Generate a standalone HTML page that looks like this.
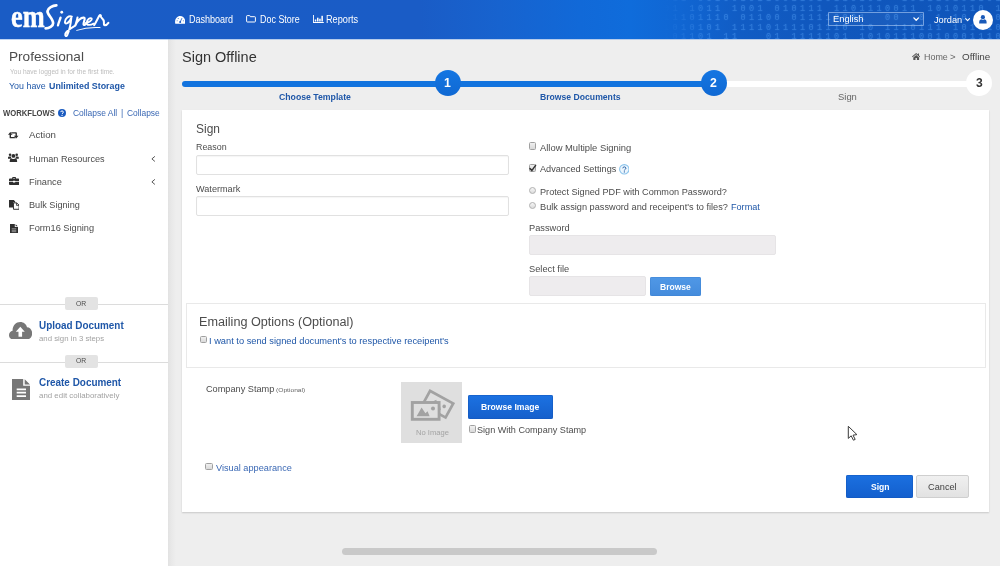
<!DOCTYPE html>
<html>
<head>
<meta charset="utf-8">
<title>emSigner - Sign Offline</title>
<style>
*{box-sizing:border-box;margin:0;padding:0}
html,body{width:1000px;height:566px;overflow:hidden;background:#eeeeee;font-family:"Liberation Sans",sans-serif;color:#444}
#wrap{position:relative;width:1000px;height:566px;overflow:hidden;background:#eeeeee}
#wrap>div,#wrap>svg{position:absolute}
.t{position:absolute;white-space:nowrap;line-height:1;transform-origin:0 0;display:block}
/* header */
#hdr{left:0;top:0;width:1000px;height:39px;overflow:hidden;background:linear-gradient(90deg,#1a5cc5 0%,#1a5cc6 42%,#1763cf 50%,#1169d8 58%,#0f6cdb 63%,#1066d3 68%,#115cc4 74%,#1057bd 82%,#0f55ba 100%)}
#matrix{position:absolute;left:664px;top:-5px;width:340px;height:52px;font-family:"Liberation Mono",monospace;font-size:8.5px;line-height:9.6px;color:#63adff;opacity:.38;filter:blur(.35px);letter-spacing:3.4px;white-space:pre;overflow:hidden;text-shadow:0 0 1.5px #4a9cf5;-webkit-mask-image:linear-gradient(90deg,transparent 0,#000 14%,#000 100%)}
#lang{left:828px;top:12px;width:96px;height:14px;border:1px solid rgba(190,215,250,.55);border-radius:1px;background:rgba(255,255,255,.04)}
#avatar{left:973px;top:10px;width:20px;height:20px;border-radius:50%;background:#fff}
/* sidebar */
#side{left:0;top:39px;width:168px;height:527px;background:#fff}
#sideshadow{left:168px;top:39px;width:8px;height:527px;background:linear-gradient(90deg,#e2e2e2 0%,#e8e8e8 40%,#eeeeee 100%)}
.hr{left:0;width:168px;height:1px;background:#dcdcdc}
.or{left:65px;width:33px;height:13px;background:#e3e3e3;border-radius:2px}
/* stepper */
.bar{top:80.9px;height:6.4px}
.dot{width:26px;height:26px;border-radius:50%;top:70px}
/* card */
#card{left:182.3px;top:110.4px;width:806.5px;height:401.4px;background:#fff;box-shadow:0 1px 1.5px rgba(0,0,0,.16)}
.inp{border:1px solid #e1e1e1;border-radius:2px;background:#fff;box-shadow:inset 0 1px 1px rgba(0,0,0,.04)}
.inp.dis{background:#eeecee;border-color:#e6e4e6;box-shadow:none}
.cb{width:7.5px;height:7.5px;border:1px solid #a0a0a0;border-radius:1.5px;background:linear-gradient(#f0f0f0,#d9d9d9)}
.rb{width:7px;height:7px;border:1px solid #b0b0b0;border-radius:50%;background:linear-gradient(#f6f6f6,#dcdcdc)}
.btn{border-radius:2px}
</style>
</head>
<body>
<div id="wrap">

<!-- HEADER -->
<div id="hdr">
<div id="matrix">011 0010010110011010110101  1011101011011101
01 1011 1001 010111 1101110011 1010110 10100
11101110 01100 011110001  00  0 1 10 1 00101
1010101 11110111101110 10 1110111 1011100011
101101 11   01 1111101 101011100100011100100
1111 001010011110010 0 01 1101101 1010 0 010</div>
</div>
<div id="lang"></div>
<div id="avatar"></div>

<!-- SIDEBAR -->
<div id="side"></div>
<div id="sideshadow"></div>
<div id="hline" style="left:0;top:39px;width:1000px;height:1.4px;background:linear-gradient(rgba(120,165,230,.75),rgba(170,200,240,.35))"></div>
<div class="hr" style="top:303.5px"></div>
<div class="or" style="top:297px"></div>
<div class="hr" style="top:361.5px"></div>
<div class="or" style="top:354.5px"></div>

<!-- STEPPER -->
<div class="bar" style="left:182px;width:532px;background:#1273de;border-radius:3px 0 0 3px"></div>
<div class="bar" style="left:713px;width:266px;background:#fff"></div>
<div class="dot" style="left:434.5px;background:linear-gradient(#1476e2,#1069d3)"></div>
<div class="dot" style="left:700.5px;background:linear-gradient(#1476e2,#1069d3)"></div>
<div class="dot" style="left:966px;background:#fff"></div>

<!-- CARD -->
<div id="card"></div>
<div class="inp" style="left:196px;top:155px;width:312.5px;height:19.5px"></div>
<div class="inp" style="left:196px;top:196px;width:312.5px;height:19.5px"></div>
<div class="cb" style="left:528.6px;top:142.4px"></div>
<div class="cb" style="left:528.6px;top:164.4px"></div>
<div class="rb" style="left:528.8px;top:186.5px"></div>
<div class="rb" style="left:528.8px;top:201.8px"></div>
<div class="inp dis" style="left:528.6px;top:235px;width:247.4px;height:19.6px"></div>
<div class="inp dis" style="left:528.6px;top:276.4px;width:117.4px;height:19.6px"></div>
<div class="btn" style="left:649.6px;top:277px;width:51.8px;height:19px;background:linear-gradient(#5098e6,#448bdc);box-shadow:0 0 0 .5px #3f84d4 inset"></div>
<!-- emailing box -->
<div style="left:185.5px;top:302.5px;width:800px;height:65.5px;border:1px solid #e9e9e9;background:#fff"></div>
<div class="cb" style="left:199.6px;top:335.6px"></div>
<!-- stamp -->
<div style="left:400.5px;top:381.5px;width:61.3px;height:61px;background:#dfdfdf"></div>
<div class="btn" style="left:468px;top:395px;width:84.5px;height:23.5px;background:linear-gradient(#1c72e2,#155fcb);box-shadow:0 0 0 .5px #1257bb inset"></div>
<div class="cb" style="left:468.6px;top:425px"></div>
<div class="cb" style="left:205.4px;top:462.8px"></div>
<!-- buttons -->
<div class="btn" style="left:846.4px;top:475.2px;width:66.4px;height:23px;background:linear-gradient(#1b70e0,#135fcd);box-shadow:0 0 0 .5px #1257bb inset"></div>
<div class="btn" style="left:916px;top:475.2px;width:53px;height:23px;background:linear-gradient(#f0f0f0,#e2e2e2);border:1px solid #cfcfcf"></div>
<!-- scrollbar -->
<div style="left:342.3px;top:548px;width:314.3px;height:7px;border-radius:3.5px;background:#c9c9c9"></div>

<!-- LOGO -->
<span class="t" style="left:11.0px;top:0.9px;font-family:'Liberation Serif',serif;font-weight:700;font-size:31px;color:#fff;-webkit-text-stroke:.45px #fff;transform:scaleX(.85)">em</span>
<svg style="left:0;top:0" width="120" height="40" viewBox="0 0 120 40" fill="none" stroke="#fff" stroke-linecap="round" stroke-linejoin="round">
<g transform="translate(40,0) scale(0.075)">
<path d="M218,72 C170,75 105,105 100,150 C97,195 175,250 175,310 C175,350 120,378 75,378" stroke-width="36"/>
<circle cx="290" cy="163" r="19" fill="#fff" stroke="none"/>
<path d="M274,235 C264,270 246,305 240,338" stroke-width="31"/>
<path d="M425,222 C385,200 332,248 332,295 C334,328 388,318 418,235 C412,300 395,400 362,470 C350,492 330,480 338,450 C350,410 420,370 468,342" stroke-width="26"/>
<path d="M500,235 C495,270 480,305 472,337 C495,280 545,230 585,235 C615,240 575,300 580,325 C583,340 600,335 612,318" stroke-width="28"/>
<path d="M612,305 C650,300 700,270 690,248 C675,225 625,260 622,305 C622,340 670,340 715,315" stroke-width="24"/>
<path d="M722,335 C750,295 775,235 792,207 C800,197 815,202 812,217 C808,240 850,250 852,290 C853,320 848,338 866,338 C886,336 900,322 912,305" stroke-width="27"/>
<path d="M490,405 C580,375 700,362 800,368" stroke-width="14"/>
</g>
</svg>

<!-- NAV ICONS -->
<svg style="left:174.6px;top:15.6px" width="10.4" height="8.2" viewBox="0 0 20.8 16.4">
<path d="M0.6,15.6 C-1.4,7 3.6,0.2 10.4,0.2 C17.2,0.2 22.2,7 20.2,15.6 Z" fill="#fff"/>
<circle cx="10.4" cy="12" r="2" fill="#1a5cc5"/><path d="M10.4,12 L13.6,5" stroke="#1a5cc5" stroke-width="1.6" stroke-linecap="round"/>
<circle cx="4.2" cy="9.6" r="1" fill="#1a5cc5"/><circle cx="6.4" cy="5.2" r="1" fill="#1a5cc5"/><circle cx="16.6" cy="9.6" r="1" fill="#1a5cc5"/>
</svg>
<svg style="left:246.2px;top:15.4px" width="10" height="7.6" viewBox="0 0 20 15.2" fill="none" stroke="#fff" stroke-width="2" stroke-linejoin="round">
<path d="M1.2,2.6 Q1.2,1.2 2.6,1.2 H7 Q8.2,1.2 8.4,2.4 L8.6,3.4 H17.4 Q18.8,3.4 18.8,4.8 V12.6 Q18.8,14 17.4,14 H2.6 Q1.2,14 1.2,12.6 Z"/>
</svg>
<svg style="left:312.8px;top:15.2px" width="10.8" height="8" viewBox="0 0 21.6 16" fill="#fff">
<path d="M0,0 H1.8 V14.2 H21.6 V16 H0 Z"/>
<rect x="3.6" y="9" width="3" height="4"/><rect x="8" y="5.4" width="3" height="7.6"/><rect x="12.4" y="7.4" width="3" height="5.6"/><rect x="16.8" y="1.6" width="3" height="11.4"/>
</svg>
<svg style="left:912.6px;top:16.8px" width="6.4" height="4.4" viewBox="0 0 6.4 4.4" fill="none" stroke="#fff" stroke-width="1.35" stroke-linecap="round" stroke-linejoin="round"><path d="M.9,.9 L3.2,3.3 L5.5,.9"/></svg>
<svg style="left:965px;top:18.4px" width="5.2" height="3.6" viewBox="0 0 5.2 3.6" fill="none" stroke="#fff" stroke-width="1.1" stroke-linecap="round" stroke-linejoin="round"><path d="M.7,.7 L2.6,2.7 L4.5,.7"/></svg>
<svg style="left:979.4px;top:15.4px" width="7.8" height="8.8" viewBox="0 0 15.6 17.6" fill="#1a5ab8">
<circle cx="7.8" cy="4.4" r="4.2"/><path d="M0.4,17.2 V13.6 Q0.4,8.8 5,8.6 Q7.8,10.6 10.6,8.6 Q15.2,8.8 15.2,13.6 V17.2 Z"/>
</svg>
<!-- home -->
<svg style="left:911.6px;top:53px" width="8.4" height="7.2" viewBox="0 0 16.8 14.4" fill="#555">
<path d="M8.4,0 L0,7.2 L1.2,8.6 L8.4,2.6 L15.6,8.6 L16.8,7.2 L14,4.8 V1 H11.8 V2.9 Z"/>
<path d="M8.4,4.2 L2.6,9 V14.4 H7 V10 H9.8 V14.4 H14.2 V9 Z"/>
</svg>

<!-- SIDEBAR ICONS -->
<svg style="left:57.8px;top:109.2px" width="8" height="8" viewBox="0 0 16 16"><circle cx="8" cy="8" r="8" fill="#1a5bc0"/>
<path d="M5.4,6.2 C5.4,3 10.8,3 10.8,6.2 C10.8,8.2 8.1,8 8.1,10.2" fill="none" stroke="#fff" stroke-width="2"/><circle cx="8.1" cy="12.8" r="1.2" fill="#fff"/></svg>
<!-- retweet -->
<svg style="left:8.4px;top:132.1px" width="10.5" height="6.5" viewBox="0 0 21 13" fill="#2e2e2e">
<path d="M4.6,0 L9.2,5.6 H6 V9.8 H13 L15.4,12.6 H5 Q3.2,12.6 3.2,10.8 V5.6 H0 Z"/>
<path d="M16.4,13 L11.8,7.4 H15 V3.2 H8 L5.6,0.4 H16 Q17.8,0.4 17.8,2.2 V7.4 H21 Z"/>
</svg>
<!-- users -->
<svg style="left:8.2px;top:153.1px" width="10.8" height="9.4" viewBox="0 0 21.6 18.8" fill="#2e2e2e">
<circle cx="4.2" cy="3.4" r="2.6"/><circle cx="17.4" cy="3.4" r="2.6"/><circle cx="10.8" cy="5.8" r="3.8"/>
<path d="M0,11.4 V9 Q0,6.8 2.4,6.8 H6 Q5.6,9.4 7.4,11.4 Z"/><path d="M21.6,11.4 V9 Q21.6,6.8 19.2,6.8 H15.6 Q16,9.4 14.2,11.4 Z"/>
<path d="M3.4,18.8 V15.4 Q3.4,11.2 7.6,11 Q10.8,13.2 14,11 Q18.2,11.2 18.2,15.4 V18.8 Z"/>
</svg>
<!-- briefcase -->
<svg style="left:8.5px;top:177px" width="10.2" height="8" viewBox="0 0 20.4 16" fill="#2e2e2e">
<path d="M6.4,3 V1.6 Q6.4,0 8,0 H12.4 Q14,0 14,1.6 V3 H18.6 Q20.4,3 20.4,4.8 V8.4 H12.4 V7.4 H8 V8.4 H0 V4.8 Q0,3 1.8,3 Z M8.2,3 H12.2 V1.8 H8.2 Z"/>
<path d="M0,9.8 H8 V11.2 H12.4 V9.8 H20.4 V14.2 Q20.4,16 18.6,16 H1.8 Q0,16 0,14.2 Z"/>
</svg>
<!-- files -->
<svg style="left:8.5px;top:199.8px" width="10.6" height="9.8" viewBox="0 0 21.2 19.6">
<path d="M0,0 H9.6 L12.4,2.8 V5 H8 V15.2 H0 Z" fill="#2e2e2e"/>
<path d="M9,5.8 H15.4 L20.2,10.4 V18.6 H9 Z" fill="#fff" stroke="#2e2e2e" stroke-width="1.9" stroke-linejoin="round"/>
<path d="M15,6 V10.8 H20" fill="none" stroke="#2e2e2e" stroke-width="1.6"/>
</svg>
<!-- file-text -->
<svg style="left:9.8px;top:223.6px" width="8" height="9.4" viewBox="0 0 16 18.8">
<path d="M0,0 H9.6 V6 H16 V18.8 H0 Z M11.2,0.4 L15.6,4.6 H11.2 Z" fill="#2e2e2e"/>
<path d="M3.4,9.6 H12.6 M3.4,12.6 H12.6 M3.4,15.4 H12.6" stroke="#fff" stroke-width="1.2" opacity=".8"/>
</svg>
<!-- chevrons left -->
<svg style="left:151.4px;top:155.8px" width="4.4" height="5.8" viewBox="0 0 4.4 5.8" fill="none" stroke="#555" stroke-width="1" stroke-linecap="round" stroke-linejoin="round"><path d="M3.6,.6 L.9,2.9 L3.6,5.2"/></svg>
<svg style="left:151.4px;top:179.4px" width="4.4" height="5.8" viewBox="0 0 4.4 5.8" fill="none" stroke="#555" stroke-width="1" stroke-linecap="round" stroke-linejoin="round"><path d="M3.6,.6 L.9,2.9 L3.6,5.2"/></svg>
<!-- cloud upload -->
<svg style="left:9px;top:321.6px" width="23.2" height="17.8" viewBox="0 0 46.4 35.6">
<path d="M10.6,35.6 C4,35.6 0,31.2 0,26.4 C0,21.8 3.2,18.4 7.2,17.6 C6.6,7.4 14,0 22.4,0 C29.4,0 34.4,4.4 36,10.4 C42,10.6 46.4,15.8 46.4,22.6 C46.4,30 41,35.6 34.4,35.6 Z" fill="#777"/>
<path d="M22.6,9.6 L31.6,19.4 H26.2 V29.4 H19 V19.4 H13.6 Z" fill="#fff"/>
</svg>
<!-- doc -->
<svg style="left:12px;top:379px" width="18.2" height="21.4" viewBox="0 0 36.4 42.8">
<path d="M0,0 H22.4 V13.6 H36.4 V42.8 H0 Z M25.4,0.4 L36,10.8 H25.4 Z" fill="#777"/>
<path d="M9.4,20.6 H28 M9.4,27.4 H28 M9.4,34.4 H28" stroke="#fff" stroke-width="3.4"/>
</svg>

<!-- CARD ICONS -->
<svg style="left:528.4px;top:163.6px" width="9.4" height="9.4" viewBox="0 0 9.4 9.4" fill="none" stroke="#333" stroke-width="1.5" stroke-linecap="round" stroke-linejoin="round"><path d="M2,4.6 L3.8,6.6 L7.6,1.4"/></svg>
<svg style="left:618.6px;top:164.4px" width="10.6" height="10.6" viewBox="0 0 21.2 21.2"><circle cx="10.6" cy="10.6" r="9.4" fill="#edf6fd" stroke="#8cc4ec" stroke-width="2.2"/>
<path d="M7.6,8.6 C7.6,4.8 13.8,4.8 13.8,8.6 C13.8,10.8 10.7,10.8 10.7,13" fill="none" stroke="#1d5aa0" stroke-width="1.9"/><circle cx="10.7" cy="15.8" r="1.2" fill="#1d5aa0"/></svg>
<!-- image placeholder -->
<svg style="left:400.5px;top:381.5px" width="61.3" height="61" viewBox="0 0 61.3 61">
<g transform="translate(28.6,7.2) rotate(28.7)"><rect x="1.2" y="1.2" width="26.4" height="16" fill="#dfdfdf" stroke="#a2a2a2" stroke-width="2.7"/><circle cx="21" cy="8" r="1.8" fill="#a2a2a2"/><path d="M6,13 L11,6 L14,10 L16,8.4 L20,13 Z" fill="#a2a2a2"/></g>
<rect x="11.3" y="20.5" width="26.8" height="16.8" fill="#dfdfdf" stroke="#a2a2a2" stroke-width="2.9"/>
<path d="M15.6,34.2 L20.6,25.4 L24.4,31.2 L26.6,29.2 L28.6,34.2 Z" fill="#a2a2a2"/><circle cx="32" cy="26.6" r="2" fill="#a2a2a2"/>
</svg>
<!-- cursor -->
<svg style="left:846px;top:424px" width="14" height="18" viewBox="0 0 14 18"><path d="M2.3,2.3 V14.4 L5.2,11.8 L7.4,16.2 L9.2,15.4 L7,11.2 L10.9,10.6 Z" fill="#fff" stroke="#3a3a3a" stroke-width="1" stroke-linejoin="round"/></svg>


<div id="txt" style="left:0;top:0;width:1000px;height:566px;will-change:transform;opacity:.999">
<span class="t" style="left:189.00px;top:14.71px;font-size:10.27px;color:#fff;transform:rotate(.02deg) scaleX(0.8790)">Dashboard</span>
<span class="t" style="left:260.00px;top:14.71px;font-size:10.27px;color:#fff;transform:rotate(.02deg) scaleX(0.8708)">Doc Store</span>
<span class="t" style="left:326.00px;top:14.71px;font-size:10.27px;color:#fff;transform:rotate(.02deg) scaleX(0.8936)">Reports</span>
<span class="t" style="left:832.60px;top:13.87px;font-size:9.6px;color:#fff;transform:rotate(.02deg) scaleX(0.9701)">English</span>
<span class="t" style="left:933.80px;top:14.87px;font-size:9.6px;color:#fff;transform:rotate(.02deg) scaleX(0.9621)">Jordan</span>
<span class="t" style="left:8.92px;top:50.85px;font-size:12.58px;color:#4c4c4c;transform:rotate(.02deg) scaleX(1.0827)">Professional</span>
<span class="t" style="left:9.60px;top:68.76px;font-size:6.43px;color:#bdbdbd;transform:rotate(.02deg) scaleX(1.0241)">You have logged in for the first time.</span>
<span class="t" style="left:9.40px;top:81.03px;font-size:9.41px;color:#1f57a8;transform:rotate(.02deg) scaleX(0.9443)">You have</span>
<span class="t" style="left:49.00px;top:81.03px;font-size:9.41px;color:#1f57a8;transform:rotate(.02deg) scaleX(0.9420);font-weight:700">Unlimited Storage</span>
<span class="t" style="left:3.00px;top:108.93px;font-size:8.35px;color:#444;transform:rotate(.02deg) scaleX(0.9179);font-weight:700">WORKFLOWS</span>
<span class="t" style="left:72.80px;top:108.69px;font-size:8.64px;color:#3a68b4;transform:rotate(.02deg) scaleX(0.9819)">Collapse All</span>
<span class="t" style="left:121.40px;top:108.69px;font-size:8.64px;color:#3a68b4;transform:rotate(.02deg) scaleX(1.0000)">|</span>
<span class="t" style="left:127.20px;top:108.69px;font-size:8.64px;color:#3a68b4;transform:rotate(.02deg) scaleX(0.9744)">Collapse</span>
<span class="t" style="left:28.60px;top:130.41px;font-size:9.79px;color:#4c4c4c;transform:rotate(.02deg) scaleX(0.9908)">Action</span>
<span class="t" style="left:28.60px;top:153.51px;font-size:9.79px;color:#4c4c4c;transform:rotate(.02deg) scaleX(0.9333)">Human Resources</span>
<span class="t" style="left:28.60px;top:177.01px;font-size:9.79px;color:#4c4c4c;transform:rotate(.02deg) scaleX(0.9430)">Finance</span>
<span class="t" style="left:28.60px;top:199.91px;font-size:9.79px;color:#4c4c4c;transform:rotate(.02deg) scaleX(0.9345)">Bulk Signing</span>
<span class="t" style="left:28.60px;top:223.41px;font-size:9.79px;color:#4c4c4c;transform:rotate(.02deg) scaleX(0.9431)">Form16 Signing</span>
<span class="t" style="left:76.30px;top:300.00px;font-size:7.68px;color:#4c4c4c;transform:rotate(.02deg) scaleX(0.8857)">OR</span>
<span class="t" style="left:39.20px;top:320.82px;font-size:10.37px;color:#1f57a8;transform:rotate(.02deg) scaleX(0.9554);font-weight:700">Upload Document</span>
<span class="t" style="left:39.20px;top:334.96px;font-size:7.49px;color:#a2a2a2;transform:rotate(.02deg) scaleX(1.0420)">and sign in 3 steps</span>
<span class="t" style="left:76.30px;top:357.30px;font-size:7.68px;color:#4c4c4c;transform:rotate(.02deg) scaleX(0.8857)">OR</span>
<span class="t" style="left:39.20px;top:378.12px;font-size:10.37px;color:#1f57a8;transform:rotate(.02deg) scaleX(0.9580);font-weight:700">Create Document</span>
<span class="t" style="left:39.20px;top:392.16px;font-size:7.49px;color:#a2a2a2;transform:rotate(.02deg) scaleX(1.0550)">and edit collaboratively</span>
<span class="t" style="left:182.00px;top:50.19px;font-size:14.78px;color:#333;transform:rotate(.02deg) scaleX(0.9822)">Sign Offline</span>
<span class="t" style="left:924.00px;top:52.37px;font-size:9.6px;color:#666;transform:rotate(.02deg) scaleX(0.9305)">Home</span>
<span class="t" style="left:949.75px;top:52.37px;font-size:9.6px;color:#666;transform:rotate(.02deg) scaleX(1.0000)">&gt;</span>
<span class="t" style="left:961.50px;top:52.37px;font-size:9.6px;color:#444;transform:rotate(.02deg) scaleX(1.0287)">Offline</span>
<span class="t" style="left:278.60px;top:92.03px;font-size:9.89px;color:#1f57a8;transform:rotate(.02deg) scaleX(0.8820);font-weight:700">Choose Template</span>
<span class="t" style="left:540.00px;top:92.03px;font-size:9.89px;color:#1f57a8;transform:rotate(.02deg) scaleX(0.8738);font-weight:700">Browse Documents</span>
<span class="t" style="left:837.60px;top:91.83px;font-size:9.89px;color:#666;transform:rotate(.02deg) scaleX(0.9547)">Sign</span>
<span class="t" style="left:443.60px;top:77.10px;font-size:12.29px;color:#fff;transform:rotate(.02deg) scaleX(1.0000);font-weight:700">1</span>
<span class="t" style="left:709.90px;top:77.10px;font-size:12.29px;color:#fff;transform:rotate(.02deg) scaleX(1.0000);font-weight:700">2</span>
<span class="t" style="left:975.60px;top:77.36px;font-size:12.1px;color:#333;transform:rotate(.02deg) scaleX(1.0000);font-weight:700">3</span>
<span class="t" style="left:196.00px;top:122.74px;font-size:12.48px;color:#4c4c4c;transform:rotate(.02deg) scaleX(0.9592)">Sign</span>
<span class="t" style="left:196.00px;top:142.43px;font-size:9.41px;color:#4c4c4c;transform:rotate(.02deg) scaleX(0.9444)">Reason</span>
<span class="t" style="left:196.00px;top:183.63px;font-size:9.41px;color:#4c4c4c;transform:rotate(.02deg) scaleX(0.9709)">Watermark</span>
<span class="t" style="left:539.60px;top:143.11px;font-size:9.79px;color:#4c4c4c;transform:rotate(.02deg) scaleX(0.9588)">Allow Multiple Signing</span>
<span class="t" style="left:539.60px;top:164.31px;font-size:9.79px;color:#4c4c4c;transform:rotate(.02deg) scaleX(0.9354)">Advanced Settings</span>
<span class="t" style="left:539.60px;top:186.71px;font-size:9.79px;color:#4c4c4c;transform:rotate(.02deg) scaleX(0.9341)">Protect Signed PDF with Common Password?</span>
<span class="t" style="left:539.60px;top:202.11px;font-size:9.79px;color:#4c4c4c;transform:rotate(.02deg) scaleX(0.9404)">Bulk assign password and receipent's to files?</span>
<span class="t" style="left:730.90px;top:202.11px;font-size:9.79px;color:#1f57a8;transform:rotate(.02deg) scaleX(0.9309)">Format</span>
<span class="t" style="left:529.00px;top:222.63px;font-size:9.41px;color:#4c4c4c;transform:rotate(.02deg) scaleX(0.9837)">Password</span>
<span class="t" style="left:529.00px;top:264.03px;font-size:9.41px;color:#4c4c4c;transform:rotate(.02deg) scaleX(0.9865)">Select file</span>
<span class="t" style="left:659.70px;top:281.51px;font-size:9.79px;color:#fff;transform:rotate(.02deg) scaleX(0.8720);font-weight:700">Browse</span>
<span class="t" style="left:199.09px;top:315.94px;font-size:12.48px;color:#4c4c4c;transform:rotate(.02deg) scaleX(1.0132)">Emailing Options (Optional)</span>
<span class="t" style="left:209.40px;top:335.63px;font-size:9.41px;color:#1f57a8;transform:rotate(.02deg) scaleX(0.9862)">I want to send signed document's to respective receipent's</span>
<span class="t" style="left:206.00px;top:384.47px;font-size:9.6px;color:#4c4c4c;transform:rotate(.02deg) scaleX(0.9562)">Company Stamp</span>
<span class="t" style="left:276.40px;top:387.12px;font-size:6.24px;color:#666;transform:rotate(.02deg) scaleX(1.0697)">(Optional)</span>
<span class="t" style="left:415.60px;top:428.66px;font-size:7.49px;color:#a4a4a4;transform:rotate(.02deg) scaleX(1.0159)">No Image</span>
<span class="t" style="left:481.00px;top:401.55px;font-size:9.98px;color:#fff;transform:rotate(.02deg) scaleX(0.8626);font-weight:700">Browse Image</span>
<span class="t" style="left:476.70px;top:424.63px;font-size:9.89px;color:#4c4c4c;transform:rotate(.02deg) scaleX(0.9206)">Sign With Company Stamp</span>
<span class="t" style="left:216.40px;top:462.63px;font-size:9.41px;color:#3a68b4;transform:rotate(.02deg) scaleX(0.9753)">Visual appearance</span>
<span class="t" style="left:871.00px;top:481.95px;font-size:9.98px;color:#fff;transform:rotate(.02deg) scaleX(0.8601);font-weight:700">Sign</span>
<span class="t" style="left:928.00px;top:482.11px;font-size:9.79px;color:#444;transform:rotate(.02deg) scaleX(0.9414)">Cancel</span>
</div>

</div>
</body>
</html>
